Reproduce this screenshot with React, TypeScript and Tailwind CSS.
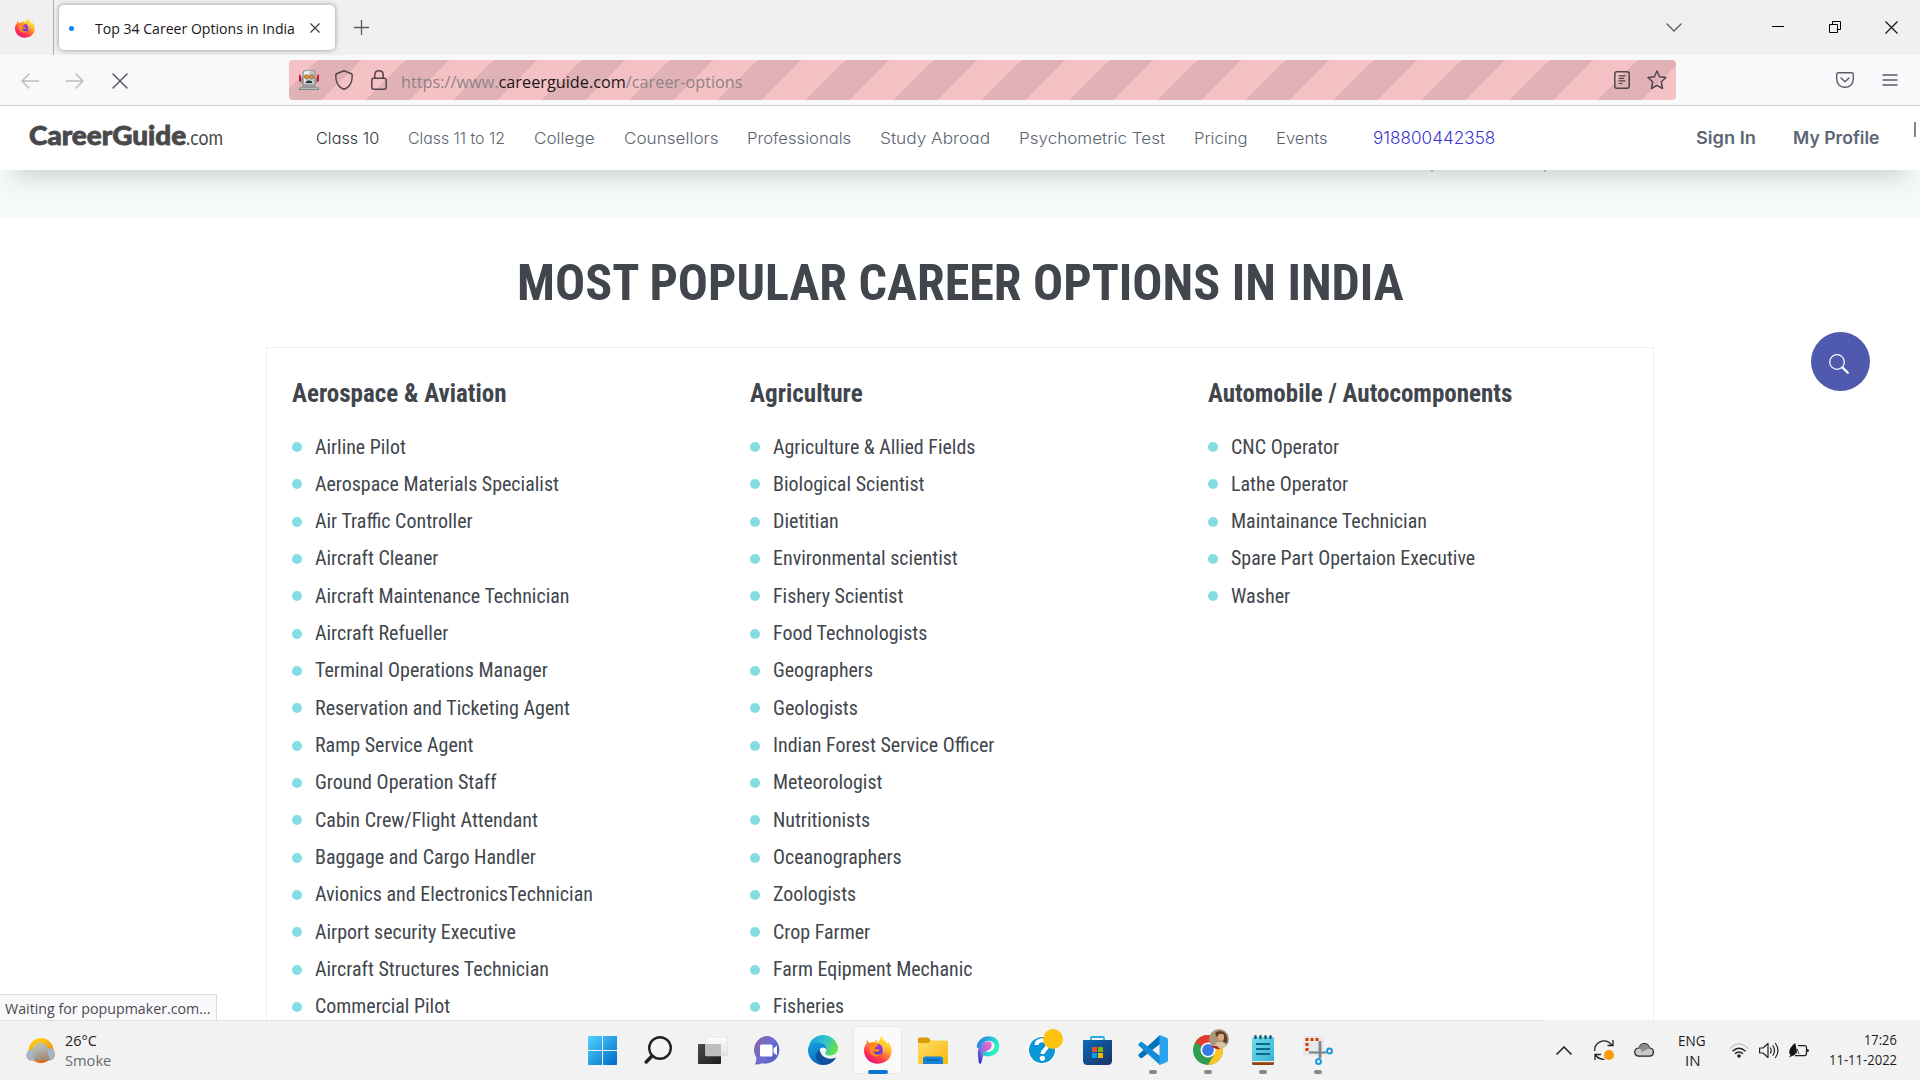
import { useLayoutEffect, useRef, useState } from "react";
import type { ReactNode } from "react";

/** A line of text that keeps a fixed advance width whatever the fallback font. */
function Fit({ w, children, className = "" }: { w: number; children: ReactNode; className?: string }) {
  const ref = useRef<HTMLSpanElement>(null);
  const [k, setK] = useState(1);
  useLayoutEffect(() => {
    if (ref.current) setK(w / ref.current.offsetWidth);
  }, [w]);
  return (
    <span className={`block shrink-0 whitespace-nowrap ${className}`} style={{ width: w }}>
      <span ref={ref} className="inline-block origin-left" style={{ transform: `scaleX(${k})` }}>
        {children}
      </span>
    </span>
  );
}

const columns: { title: string; w: number; items: [string, number][] }[] = [
  {
    title: "Aerospace & Aviation",
    w: 214,
    items: [
      ["Airline Pilot", 90.5],
      ["Aerospace Materials Specialist", 243.5],
      ["Air Traffic Controller", 158],
      ["Aircraft Cleaner", 123],
      ["Aircraft Maintenance Technician", 255],
      ["Aircraft Refueller", 133],
      ["Terminal Operations Manager", 233],
      ["Reservation and Ticketing Agent", 254.5],
      ["Ramp Service Agent", 158],
      ["Ground Operation Staff", 182],
      ["Cabin Crew/Flight Attendant", 223],
      ["Baggage and Cargo Handler", 220.5],
      ["Avionics and ElectronicsTechnician", 278],
      ["Airport security Executive", 200.5],
      ["Aircraft Structures Technician", 234],
      ["Commercial Pilot", 135.5],
    ],
  },
  {
    title: "Agriculture",
    w: 112.5,
    items: [
      ["Agriculture & Allied Fields", 202.5],
      ["Biological Scientist", 151],
      ["Dietitian", 66],
      ["Environmental scientist", 185],
      ["Fishery Scientist", 130],
      ["Food Technologists", 154],
      ["Geographers", 100.5],
      ["Geologists", 84.5],
      ["Indian Forest Service Officer", 221],
      ["Meteorologist", 109.5],
      ["Nutritionists", 97.5],
      ["Oceanographers", 128.5],
      ["Zoologists", 83.5],
      ["Crop Farmer", 97],
      ["Farm Eqipment Mechanic", 199.5],
      ["Fisheries", 71.5],
    ],
  },
  {
    title: "Automobile / Autocomponents",
    w: 304,
    items: [
      ["CNC Operator", 108],
      ["Lathe Operator", 117],
      ["Maintainance Technician", 196],
      ["Spare Part Opertaion Executive", 244.5],
      ["Washer", 59.5],
    ],
  },
];

const nav: [string, number][] = [
  ["Class 10", 63],
  ["Class 11 to 12", 97],
  ["College", 61],
  ["Counsellors", 94],
  ["Professionals", 104],
  ["Study Abroad", 110],
  ["Psychometric Test", 146],
  ["Pricing", 53],
  ["Events", 52],
];

function Firefox({ id, className }: { id: string; className: string }) {
  return (
    <svg viewBox="0 0 85 85" className={className}>
      <defs>
        <linearGradient id={id} x1="0.8" y1="0.05" x2="0.25" y2="0.95">
          <stop offset="0" stopColor="#fff44f" />
          <stop offset="0.3" stopColor="#ffc02e" />
          <stop offset="0.55" stopColor="#ff7139" />
          <stop offset="0.8" stopColor="#ff2f52" />
          <stop offset="1" stopColor="#e31587" />
        </linearGradient>
        <linearGradient id={id + "b"} x1="0.8" y1="0" x2="0.3" y2="1">
          <stop offset="0" stopColor="#b833e1" />
          <stop offset="1" stopColor="#4a3fc8" />
        </linearGradient>
      </defs>
      <path
        d="M10 10C11 16 13 19 17 21C22 18 27 18 31 19C34 14 37 12 42 11C39 14 38 17 39 20C43 18 47 15 49 12C49 7 51 3 54 0C56 9 62 12 67 18C69 20 70 23 71 25C72 22 72 19 71 16C79 23 84 34 84 45C84 67 66 84 42 84C18 84 0 67 0 44C0 33 4 27 8 22C8 17 8 14 10 10Z"
        fill={`url(#${id})`}
      />
      <circle cx="43" cy="42" r="18" fill={`url(#${id}b)`} />
      <path
        d="M13 24C20 19 27 20 32 23C38 24 42 25 42 29C42 33 34 33 33 37C33 40 37 41 40 40C47 38 49 43 44 46C37 50 31 47 27 46C32 57 47 60 56 51C48 66 25 66 19 50C15 40 22 34 13 24Z"
        fill="#ff8a1f"
      />
      <path d="M49 12C53 18 60 23 62 32C65 42 61 50 56 54C59 42 58 31 48 25C42 22 45 16 49 12Z" fill="#ffcb37" />
    </svg>
  );
}

function BackArrow({ flip = false }: { flip?: boolean }) {
  return (
    <svg viewBox="0 0 20 20" className={`mt-px size-5 ${flip ? "-scale-x-100" : ""}`} fill="none" stroke="#bdbdc1" strokeWidth="1.5" strokeLinecap="round" strokeLinejoin="round">
      <path d="M18.5 10H2M9 3L2 10L9 17" />
    </svg>
  );
}

function TabStrip() {
  return (
    <div className="flex h-[55px] shrink-0 items-center bg-[#f0f0f0]">
      <div className="flex h-full w-[54px] items-center border-r border-[#acacae] pl-[15px]">
        <Firefox id="ffa" className="size-5" />
      </div>
      <div className="ml-[5px] flex h-[45px] w-[276px] items-center rounded-[5px] bg-white shadow-[0_0_5px_rgba(0,0,0,0.4)]">
        <span className="mt-px ml-[10px] size-[5px] rounded-full bg-[#0a84ff]" />
        <Fit w={200} className="mt-[2px] ml-[21px] font-['Open_Sans'] text-[14.5px] text-[#15141a]">
          Top 34 Career Options in India
        </Fit>
        <svg viewBox="0 0 10 10" className="ml-[15px] size-[10px]" stroke="#3c3b42" strokeWidth="1.2">
          <path d="M.5 .5L9.500 9.500M9.500 .5L.5 9.500" />
        </svg>
      </div>
      <svg viewBox="0 0 15 15" className="ml-[19px] size-[15px]" stroke="#5b5b66" strokeWidth="1.3">
        <path d="M7.500 0V15M0 7.500H15" />
      </svg>
      <svg viewBox="0 0 16 9" className="ml-auto h-[9px] w-4" fill="none" stroke="#5b5b66" strokeWidth="1.4" strokeLinecap="round" strokeLinejoin="round">
        <path d="M1 1L8 8L15 1" />
      </svg>
      <svg viewBox="0 0 12 12" className="-mt-px ml-[90px] size-3" stroke="#000" strokeWidth="1">
        <path d="M0 5.500H12" />
      </svg>
      <svg viewBox="0 0 12 12" className="-mt-px ml-[45px] size-3" fill="none" stroke="#000" strokeWidth="1">
        <path d="M.5 3.500H8.500V11.500H.5ZM3.500 3.500V.5H11.500V8.500H8.500" />
      </svg>
      <svg viewBox="0 0 13 13" className="mr-[22px] ml-[44px] size-[13px]" stroke="#111" strokeWidth="1.2">
        <path d="M.5 .5L12.500 12.500M12.500 .5L.5 12.500" />
      </svg>
    </div>
  );
}

function Toolbar() {
  return (
    <div className="flex h-[51px] shrink-0 items-center border-b border-[#cccccf] bg-[#f9f9fb]">
      <div className="flex w-[289px] items-center gap-[25px] pl-5">
        <BackArrow />
        <BackArrow flip />
        <svg viewBox="0 0 16 16" className="mt-[2px] ml-[2px] size-4" stroke="#5b5b66" strokeWidth="1.5" strokeLinecap="round">
          <path d="M1 1L15 15M15 1L1 15" />
        </svg>
      </div>
      <div className="flex h-10 w-[1387px] items-center rounded bg-[repeating-linear-gradient(135deg,#f4c2c5_0px,#f4c2c5_20.3px,#e0b2b5_20.3px,#e0b2b5_51.4px,#f4c2c5_51.4px,#f4c2c5_62.2px)]">
        <svg viewBox="0 0 20 20" className="ml-[10px] size-5">
          <path d="M0 4L2 6V12L0 11ZM20 4L18 6V12L20 11Z" fill="#c9142e" />
          <path d="M4 3Q4 0 7 0H13Q16 0 16 3V15H4Z" fill="#c4c8c9" stroke="#777c7e" strokeWidth=".8" />
          <path d="M2 8V13L4 14V7ZM18 8V13L16 14V7Z" fill="#8d9294" />
          <path d="M5 2Q8 .5 11 1L6 12H5Z" fill="#eef0f0" />
          <circle cx="7.400" cy="6.800" r="2" fill="#f39a1e" stroke="#6e4a34" strokeWidth=".7" />
          <circle cx="12.600" cy="6.800" r="2" fill="#f39a1e" stroke="#6e4a34" strokeWidth=".7" />
          <path d="M7 13V11.500Q10 9.500 13 11.500V13Z" fill="#33302f" />
          <path d="M3 15.500H17V17.500H3Z" fill="#94999b" />
          <path d="M0 17.500H20V20H0Z" fill="#7f8486" />
          <path d="M1 18H19V18.800H1Z" fill="#c4c8c9" />
        </svg>
        <svg viewBox="0 0 20 20" className="ml-[15px] size-5" fill="none" stroke="#53434c" strokeWidth="1.5" strokeLinejoin="round">
          <path d="M10 .8L18 4C18.800 10.500 16.500 17 10 19.300C3.500 17 1.200 10.500 2 4Z" />
        </svg>
        <svg viewBox="0 0 16 20" className="ml-[17px] h-5 w-4" fill="none" stroke="#53434c" strokeWidth="1.5">
          <rect x=".8" y="8.300" width="14.400" height="10.900" rx="2" />
          <path d="M3.800 8.300V5C3.800 -.6 12.200 -.6 12.200 5V8.300" />
        </svg>
        <Fit w={342} className="mt-[5px] ml-[14px] font-['Open_Sans'] text-[16.5px] text-[#8f8288]">
          https://www.<span className="text-[#1c151b]">careerguide.com</span>/career-options
        </Fit>
        <svg viewBox="0 0 16 18" className="ml-auto h-[18px] w-4" fill="none" stroke="#53434c" strokeWidth="1.5" strokeLinecap="round">
          <rect x=".8" y=".8" width="14.400" height="16.400" rx="2" />
          <path d="M5 4.800H11M5 7.300H9.500M5 9.800H11M5 12.500H8" strokeWidth="1.200" />
        </svg>
        <svg viewBox="0 0 20 20" className="mr-[9px] ml-[17px] size-5" fill="none" stroke="#53434c" strokeWidth="1.500" strokeLinejoin="round">
          <path d="M10 1L12.600 6.700L19 7.500L14.300 11.800L15.500 18.500L10 15.300L4.500 18.500L5.700 11.800L1 7.500L7.400 6.700Z" />
        </svg>
      </div>
      <svg viewBox="0 0 18 16" className="ml-[160px] h-4 w-[18px]" fill="none" stroke="#5b5b66" strokeWidth="1.400" strokeLinecap="round" strokeLinejoin="round">
        <path d="M2.500 .8H15.500Q17.300 .8 17.300 2.500V7C17.300 18 .7 18 .7 7V2.500Q.7 .8 2.500 .8ZM5 6L9 9.800L13 6" />
      </svg>
      <svg viewBox="0 0 16 12" className="-mt-px ml-[28px] h-3 w-4" stroke="#5b5b66" strokeWidth="1.400" strokeLinecap="round">
        <path d="M1 1H15M1 6H15M1 11H15" />
      </svg>
    </div>
  );
}

function SiteNav() {
  return (
    <div className="relative z-10 flex h-16 shrink-0 items-center bg-white font-['Inter'] [font-feature-settings:'cv11'] shadow-[0_20px_24px_-14px_rgba(0,0,0,0.17)]">
      <div className="-mt-[5px] ml-[29px] flex w-[287px] shrink-0 items-baseline font-['Lato'] text-[#49494d]">
        <Fit w={157} className="text-[27px] font-black [-webkit-text-stroke:0.8px_#49494d]">
          CareerGuide
        </Fit>
        <Fit w={37} className="text-[21px]">
          .com
        </Fit>
      </div>
      <div className="-mt-px flex items-center gap-[29px] text-[16px] font-light text-[#5b6470]">
        {nav.map(([t, w], i) => (
          <Fit key={t} w={w} className={i === 0 ? "text-[#2f3740]" : ""}>
            {t}
          </Fit>
        ))}
      </div>
      <Fit w={122} className="mt-px ml-[45px] text-[17px] font-light text-[#3a34d2]">
        918800442358
      </Fit>
      <Fit w={60} className="mt-[2px] ml-[201px] text-[17px] font-semibold text-[#5a6673]">
        Sign In
      </Fit>
      <Fit w={86} className="mt-[2px] ml-[37px] text-[17px] font-semibold text-[#5a6673]">
        My Profile
      </Fit>
      <span className="mt-[-18px] ml-[35px] h-[15px] w-[2px] bg-[#858585]" />
    </div>
  );
}

function Page() {
  return (
    <div className="relative flex min-h-0 flex-1 flex-col overflow-hidden bg-white font-['Roboto'] text-[#41464d]">
      <SiteNav />
      <div className="flex h-[47px] shrink-0 bg-[#f5f9fa]">
        <span className="z-20 ml-[1431px] h-[2px] w-[2px] bg-[#a9adb3]" />
        <span className="z-20 ml-[111px] h-[2px] w-[2px] bg-[#a9adb3]" />
      </div>
      <h1 className="mt-[36px] flex h-[60px] shrink-0 justify-center text-[50.5px] leading-[60px] font-bold font-stretch-condensed">
        <Fit w={887}>MOST POPULAR CAREER OPTIONS IN INDIA</Fit>
      </h1>
      <div className="mt-[34px] ml-[266px] grid h-[760px] w-[1388px] shrink-0 grid-cols-[458px_458px_1fr] border border-[#efefef] pt-[31px] pl-[25px]">
        {columns.map((c) => (
          <div key={c.title}>
            <h2 className="mb-[19.5px] text-[25px] leading-[30px] font-bold font-stretch-condensed">
              <Fit w={c.w}>{c.title}</Fit>
            </h2>
            <ul>
              {c.items.map(([t, w]) => (
                <li key={t} className="flex h-[37.33px] items-center text-[20px] leading-[37.33px] font-stretch-condensed">
                  <span className="mr-[13px] size-[10px] rounded-full bg-[#84dde4]" />
                  <Fit w={w}>{t}</Fit>
                </li>
              ))}
            </ul>
          </div>
        ))}
      </div>
      <button className="absolute top-[226px] left-[1811px] flex size-[59px] items-center justify-center rounded-full bg-[#4f5aae]">
        <svg viewBox="0 0 20 20" className="-ml-[3px] mt-[5px] size-5" fill="none" stroke="#fff">
          <circle cx="8" cy="8" r="7.300" strokeWidth="1.200" />
          <path d="M13.400 13.400L18.800 18.800" strokeWidth="2.200" strokeLinecap="round" />
        </svg>
      </button>
      <div className="absolute bottom-0 left-0 flex h-[26px] w-[217px] items-center border-t border-r border-[#dcdcde] bg-[#f9f9fb] pl-[5px]">
        <Fit w={206} className="mt-[3px] font-['Open_Sans'] text-[14.5px] text-[#4a4a50]">
          Waiting for popupmaker.com...
        </Fit>
      </div>
    </div>
  );
}

const apps: { name: string; icon: ReactNode; running?: boolean; active?: boolean }[] = [
  {
    name: "start",
    icon: (
      <svg viewBox="0 0 29 29" className="size-[29px]">
        <defs>
          <linearGradient id="win" x1="0" y1="0" x2="1" y2="1" gradientUnits="objectBoundingBox">
            <stop offset="0" stopColor="#50d5ff" />
            <stop offset="1" stopColor="#0067c8" />
          </linearGradient>
        </defs>
        <path d="M0 1Q0 0 1 0H14V14H0ZM15 0H28Q29 0 29 1V14H15ZM0 15H14V29H1Q0 29 0 28ZM15 15H29V28Q29 29 28 29H15Z" fill="url(#win)" />
      </svg>
    ),
  },
  {
    name: "search",
    icon: (
      <svg viewBox="0 0 28 28" className="size-7" fill="none" stroke="#222">
        <circle cx="16" cy="12" r="10.800" strokeWidth="2.400" fill="#f5f5f5" />
        <path d="M8 20L2.200 26" strokeWidth="3.400" strokeLinecap="round" />
      </svg>
    ),
  },
  {
    name: "task view",
    icon: (
      <svg viewBox="0 0 30 28" className="h-7 w-[30px]">
        <defs>
          <linearGradient id="tv" x1="0" y1="0" x2="1" y2="1">
            <stop offset="0" stopColor="#4a4a48" />
            <stop offset="1" stopColor="#1b1b1b" />
          </linearGradient>
          <linearGradient id="tv2" x1="0" y1="0" x2="0" y2="1">
            <stop offset="0" stopColor="#fff" stopOpacity=".95" />
            <stop offset="1" stopColor="#ddd" stopOpacity=".85" />
          </linearGradient>
        </defs>
        <rect x="0" y="8" width="23" height="20" rx="1" fill="url(#tv)" />
        <rect x="7.500" y="1" width="22" height="19" rx="1" fill="url(#tv2)" stroke="#d6d6d6" strokeWidth=".5" />
        <rect x="7.500" y="8" width="15.500" height="12" fill="#bdbdbd" />
      </svg>
    ),
  },
  {
    name: "chat",
    icon: (
      <svg viewBox="0 0 29 29" className="ml-[2px] size-[29px]">
        <defs>
          <linearGradient id="chat" x1="0" y1="0.2" x2="1" y2="0.8">
            <stop offset="0" stopColor="#8a62a8" />
            <stop offset=".5" stopColor="#6a6fd0" />
            <stop offset="1" stopColor="#5057c4" />
          </linearGradient>
        </defs>
        <path d="M14.500 0A14 14 0 1 1 8 27.300Q4 29 .8 28.300Q2.500 26 2.300 21.500A14 14 0 0 1 14.500 0Z" fill="url(#chat)" />
        <rect x="6" y="8.500" width="12.500" height="12" rx="1.500" fill="#fff" />
        <path d="M19.500 12.500L23 9.500V19.500L19.500 16.500Z" fill="#fff" />
      </svg>
    ),
  },
  {
    name: "edge",
    icon: (
      <svg viewBox="0 0 30 30" className="size-[30px]">
        <defs>
          <linearGradient id="edg" x1="0" y1="0.3" x2="1" y2="0.6">
            <stop offset="0" stopColor="#1b9fe0" />
            <stop offset=".5" stopColor="#2cc3d2" />
            <stop offset="1" stopColor="#6ae23e" />
          </linearGradient>
          <linearGradient id="edb" x1="0" y1="0" x2=".6" y2="1">
            <stop offset="0" stopColor="#1aa0e4" />
            <stop offset="1" stopColor="#0668b8" />
          </linearGradient>
        </defs>
        <path d="M.5 12A15 15 0 0 1 30 12.500C30 18 26 20.500 22 20.500C18 20.500 16.500 19 17.500 17.500C20 13 17 10 12 9C7 8.500 2 9 .5 12Z" fill="url(#edg)" />
        <path d="M0 14C1 9 6 6.500 11 7.500C16 8.500 19 11 18.500 15C18 12 13 11.500 11.500 15C9.500 20 14 27 22 26C25 25.500 26.500 24 27.800 22.600C25 27.500 20 30 15 30A15 15 0 0 1 0 14Z" fill="url(#edb)" />
        <path d="M11.500 14.500C5 19 8 28 15 30C21 30 26 27 28 22.500C20 26 13 22 11.500 14.500Z" fill="#10519c" />
      </svg>
    ),
  },
  { name: "firefox", active: true, icon: <Firefox id="ffb" className="size-7" /> },
  {
    name: "explorer",
    icon: (
      <svg viewBox="0 0 30 27" className="h-[27px] w-[30px]">
        <defs>
          <linearGradient id="fol" x1="0" y1="0" x2="1" y2="1">
            <stop offset="0" stopColor="#ffdc6a" />
            <stop offset="1" stopColor="#f9b90c" />
          </linearGradient>
        </defs>
        <path d="M0 2Q0 .5 1.500 .5H9.500Q10.500 .5 11.500 2L13 4H28V10H0Z" fill="#dc9b09" />
        <path d="M0 6H9.500Q10.500 6 11.500 5L13 3.500H28.500Q30 3.500 30 5V25.500Q30 27 28.500 27H1.500Q0 27 0 25.500Z" fill="url(#fol)" />
        <path d="M5 27V22Q5 19.500 7.500 19.500H22.500Q25 19.500 25 22V27Z" fill="#1583d6" />
        <path d="M8.500 23H21.500" stroke="#084f91" />
      </svg>
    ),
  },
  {
    name: "p app",
    icon: (
      <svg viewBox="0 0 24 29" className="h-[29px] w-6" fill="none">
        <defs>
          <linearGradient id="pa" x1="0" y1="0" x2="1" y2=".4">
            <stop offset="0" stopColor="#2a7be8" />
            <stop offset="1" stopColor="#25f0c6" />
          </linearGradient>
          <linearGradient id="pb" x1="1" y1="0" x2="0" y2="1">
            <stop offset="0" stopColor="#e86ad0" />
            <stop offset=".6" stopColor="#9a6be0" />
            <stop offset="1" stopColor="#1a2cc4" />
          </linearGradient>
        </defs>
        <path d="M14 7C8 6 3.500 11 3 16L4 26.500C6 22 5 18 8.500 15C11 13 14 13 14.500 10Z" fill="url(#pb)" stroke="url(#pb)" strokeWidth="2.500" strokeLinejoin="round" />
        <path d="M3 10C5 3 12 1.500 16 3C22 5 22.500 13 17.500 16.500C14 18.500 10 18.500 8.500 17.500" stroke="url(#pa)" strokeWidth="4.500" strokeLinecap="round" />
      </svg>
    ),
  },
  {
    name: "help",
    icon: (
      <svg viewBox="0 0 36 36" className="-mt-[6px] ml-[4px] size-9">
        <circle cx="15" cy="21" r="14.500" fill="#fff" />
        <circle cx="15" cy="21" r="13" fill="#0b97d6" />
        <path d="M9.500 16C9.500 9.500 20.500 9.500 20.500 16.500C20.500 20.500 15.500 20.500 15.500 25" fill="none" stroke="#fff" strokeWidth="4" />
        <circle cx="15.400" cy="29.300" r="2.600" fill="#fff" />
        <circle cx="26" cy="10" r="10" fill="#ffc20e" />
      </svg>
    ),
  },
  {
    name: "store",
    icon: (
      <svg viewBox="0 0 29 30" className="h-[30px] w-[29px]">
        <defs>
          <linearGradient id="sto" x1="0" y1="0" x2="1" y2="1">
            <stop offset="0" stopColor="#0c69ba" />
            <stop offset="1" stopColor="#1d3260" />
          </linearGradient>
        </defs>
        <path d="M8 6V3Q8 2 9 2H20Q21 2 21 3V6" fill="none" stroke="#28afea" strokeWidth="1.800" />
        <path d="M0 5H29V25.500Q29 30 24.500 30H4.500Q0 30 0 25.500Z" fill="url(#sto)" />
        <path d="M9 12H14V17H9Z" fill="#f25022" />
        <path d="M15 12H20V17H15Z" fill="#7fba00" />
        <path d="M9 18H14V23H9Z" fill="#00a4ef" />
        <path d="M15 18H20V23H15Z" fill="#ffb900" />
      </svg>
    ),
  },
  {
    name: "vs code",
    running: true,
    icon: (
      <svg viewBox="0 0 30 30" className="size-[30px]">
        <path d="M22 0V9L4 23Q3 23.500 2 22.500L.5 21Q0 20 .8 19.200Z" fill="#0072bb" />
        <path d="M22 30V21L4 7Q3 6.500 2 7.500L.5 9Q0 10 .8 10.800Z" fill="#128bd8" />
        <path d="M21.500 .2Q22 0 23 .4L29 3Q30 3.500 30 5V25Q30 26.500 29 27L23 29.600Q22 30 21.500 29.800Z" fill="#2aa3ef" />
      </svg>
    ),
  },
  {
    name: "chrome",
    running: true,
    icon: (
      <svg viewBox="0 0 36 36" className="-mt-[6px] ml-[6px] size-9">
        <circle cx="15" cy="21" r="15" fill="#2f9e4d" />
        <path d="M15 21L2 13.500A15 15 0 0 1 28 13.500H15Z" fill="#e33b2e" />
        <path d="M15 13.500H28A15 15 0 0 1 15 36L21.500 24.700Z" fill="#fcc424" />
        <circle cx="15" cy="21" r="7.500" fill="#fff" />
        <circle cx="15" cy="21" r="5.900" fill="#3b78e7" />
        <circle cx="26" cy="10" r="10" fill="#a8977c" />
        <path d="M22 4Q27 0 32 4Q35 8 34 14L30 13L31 8Q27 4 24 8Z" fill="#5a3a28" />
        <circle cx="28" cy="8" r="3.200" fill="#dba97f" />
        <path d="M21 18Q23 12 28 13Q32 13 33 17Q27 22 21 18Z" fill="#d9c3a0" />
        <path d="M18 17Q22 21 27 20L24 17Z" fill="#b01e33" />
      </svg>
    ),
  },
  {
    name: "notepad",
    running: true,
    icon: (
      <svg viewBox="0 0 22 30" className="h-[30px] w-[22px]">
        <defs>
          <linearGradient id="note" x1="0" y1="0" x2="1" y2="1">
            <stop offset="0" stopColor="#75dcec" />
            <stop offset="1" stopColor="#36b3d0" />
          </linearGradient>
        </defs>
        <path d="M0 26H22V28.500Q22 30 20.500 30H1.500Q0 30 0 28.500Z" fill="#8f4310" />
        <path d="M0 25H22V27.200H0Z" fill="#eee" />
        <path d="M0 3Q0 2 1 2H21Q22 2 22 3V26H0Z" fill="url(#note)" />
        <path d="M3.500 1.200V3M8.500 1.200V3M13.500 1.200V3M18.500 1.200V3" stroke="#165a70" strokeWidth="2.400" strokeLinecap="round" />
        <path d="M4 9H18M4 14H18M4 19H18" stroke="#0a6a86" strokeWidth="2" />
      </svg>
    ),
  },
  {
    name: "snipping",
    running: true,
    icon: (
      <svg viewBox="0 0 30 30" className="size-[30px]" fill="none">
        <rect x="0" y="1" width="21" height="20" rx="2" fill="#e9e9ec" />
        <path d="M2.500 3H5.500V6H2.500ZM7.500 3H10.500V6H7.500ZM12.500 3H15.500V6H12.500ZM2.500 8H5.500V11H2.500ZM2.500 13H5.500V16H2.500Z" fill="#d83b01" />
        <path d="M6 17.500H23" stroke="#7d858c" strokeWidth="2.200" />
        <path d="M17 6V23" stroke="#7d858c" strokeWidth="2.800" />
        <circle cx="26.500" cy="16" r="2.500" stroke="#1e9be0" strokeWidth="2" />
        <circle cx="15.500" cy="26.500" r="2.500" stroke="#1e9be0" strokeWidth="2" />
      </svg>
    ),
  },
];

function Taskbar() {
  return (
    <div className="relative flex h-[60px] shrink-0 items-center bg-[#f2f2f2] font-['Open_Sans'] text-[14px] text-[#1d1d1f]">
      <span className="absolute top-0 left-0 h-px w-[1544px] bg-[#e1e1e1]" />
      <div className="flex w-[575px] items-center pl-[26px]">
        <svg viewBox="0 0 29 27" className="h-[27px] w-[29px]">
          <defs>
            <linearGradient id="sun" x1="0" y1="0" x2=".4" y2="1">
              <stop offset="0" stopColor="#ffdf1a" />
              <stop offset=".6" stopColor="#f9a10d" />
              <stop offset="1" stopColor="#ea5f0a" />
            </linearGradient>
            <linearGradient id="smk" x1="0" y1="0" x2=".6" y2="1">
              <stop offset="0" stopColor="#d9cf9c" />
              <stop offset=".5" stopColor="#aeb2ae" />
              <stop offset="1" stopColor="#a3876f" />
            </linearGradient>
          </defs>
          <circle cx="15" cy="13.500" r="12.500" fill="url(#sun)" />
          <path d="M6 23.500C-1.500 23.500 -1.500 12.500 6.500 12.500C8 3.500 20 3.500 21.500 11C31 10 31 23.500 23 23.500Z" fill="url(#smk)" />
          <path d="M5.500 23C-1.500 22.500 -1 12.500 6.500 12.500L8 23ZM24 23C30 22 30 11 22.500 11L22 17Z" fill="#a7b6c6" />
        </svg>
        <div className="mt-px ml-[10px] leading-5">
          <Fit w={32}>26°C</Fit>
          <Fit w={46} className="text-[#69696b]">
            Smoke
          </Fit>
        </div>
      </div>
      {apps.map((a) => (
        <div key={a.name} className="relative flex h-[60px] w-[55px] items-center justify-center">
          {a.active && <span className="absolute inset-x-[3px] top-[6px] h-12 rounded-[4px] border border-[#e8e8e8] bg-[#fafafa]" />}
          <span className="relative flex">{a.icon}</span>
          {a.active && <span className="absolute bottom-[6px] h-1 w-5 rounded-full bg-[#0a78d4]" />}
          {a.running && <span className="absolute bottom-[6px] h-1 w-2 rounded-full bg-[#888]" />}
        </div>
      ))}
      <div className="ml-auto flex items-center pr-[23px]">
        <svg viewBox="0 0 16 9" className="h-[9px] w-4" fill="none" stroke="#1d1d1f" strokeWidth="1.500">
          <path d="M.5 8.500L8 1L15.500 8.500" />
        </svg>
        <svg viewBox="0 0 20 20" className="ml-[22px] size-5" fill="none" stroke="#222" strokeWidth="1.300">
          <path d="M.8 11C0 3 10 -3.500 18 5M19 0V5.500H13.500M1 20V14.500H7M1.500 15C4 18.500 7 19.500 10.500 19.300" />
          <circle cx="15" cy="15" r="5" fill="#fb9a07" stroke="none" />
        </svg>
        <svg viewBox="0 0 20 14" className="ml-5 h-[14px] w-5" stroke="#222" strokeWidth="1.200" strokeLinejoin="round">
          <path d="M5 13.200C-.7 13.200 -.7 5 5 5C7 -1 14 -.5 15.500 5C21 5 20.500 13.200 15.500 13.200Z" fill="#c9c9c9" />
          <path d="M5 5C7 -1 14 -.5 15.500 5L8 9Q7 6 5 5Z" fill="#8b8b8b" stroke="none" />
        </svg>
        <div className="mt-px ml-[24px] flex w-[28px] flex-col items-center leading-5">
          <Fit w={28}>ENG</Fit>
          <Fit w={15}>IN</Fit>
        </div>
        <svg viewBox="0 0 20 15" className="ml-[23px] h-[15px] w-5" fill="none" stroke="#222" strokeWidth="1.500">
          <path d="M.8 5.500Q10 -3.500 19.200 5.500" stroke="#c9c9c9" />
          <path d="M3.500 8.300Q10 2.300 16.500 8.300M6 10.800Q10 7.300 14 10.800" />
          <circle cx="10" cy="13" r="1.800" fill="#222" stroke="none" />
        </svg>
        <svg viewBox="0 0 20 17" className="ml-[10px] h-[17px] w-5" fill="none" stroke="#222" strokeWidth="1.200" strokeLinecap="round" strokeLinejoin="round">
          <path d="M.6 6H4L9 1.500V15.500L4 11H.6ZM11.500 6Q13 8.500 11.500 11M14 3.800Q17 8.500 14 13.200M16.500 1.500Q21.500 8.500 16.500 15.500" />
        </svg>
        <svg viewBox="0 0 20 15" className="ml-[10px] h-[15px] w-5">
          <path d="M9 2.600H15.500Q17.500 2.600 17.500 4.600V10.600Q17.500 12.600 15.500 12.600H6" fill="none" stroke="#222" strokeWidth="1.200" />
          <path d="M18 6Q20 6 20 7.500T18 9Z" fill="#222" />
          <path d="M6 0C1 4 -1.500 9 1.500 12L0 14.500L3.500 12.800C8 12.500 8.500 6 6 0Z" fill="#151515" />
          <path d="M7 11L8 6L10 11" fill="none" stroke="#222" strokeWidth=".8" />
        </svg>
        <div className="ml-5 flex w-[68px] flex-col items-end leading-5">
          <Fit w={33}>17:26</Fit>
          <Fit w={68}>11-11-2022</Fit>
        </div>
      </div>
    </div>
  );
}

export default function App() {
  return (
    <div className="flex h-[1080px] w-[1920px] flex-col overflow-hidden">
      <TabStrip />
      <Toolbar />
      <Page />
      <Taskbar />
    </div>
  );
}
